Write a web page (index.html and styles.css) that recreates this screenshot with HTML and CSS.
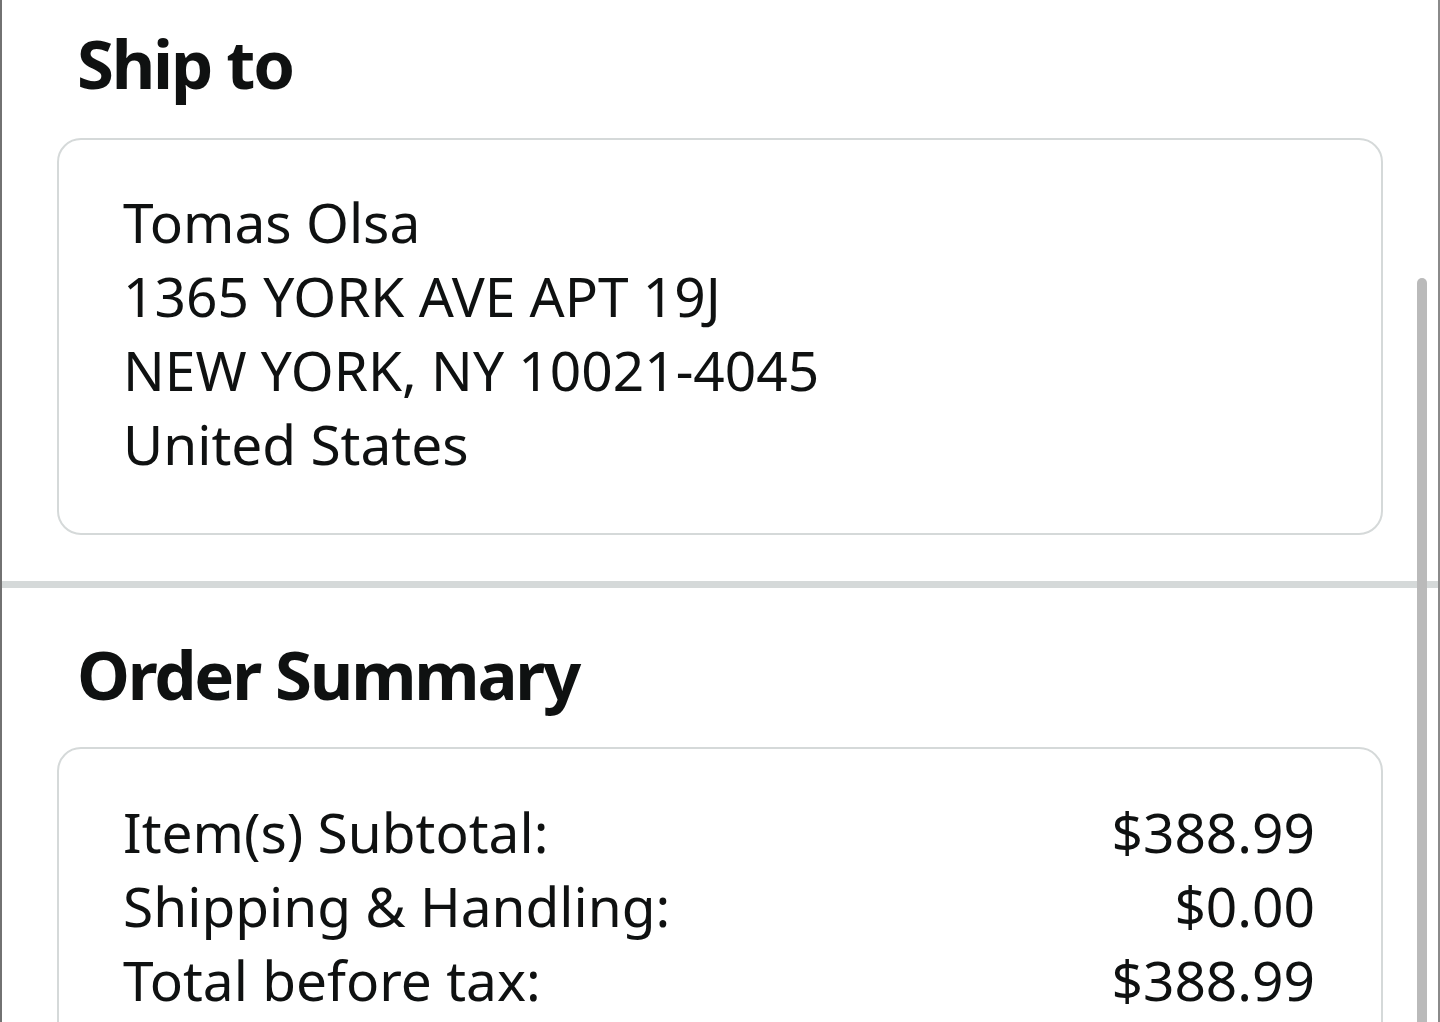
FILE: index.html
```html
<!DOCTYPE html>
<html lang="en">
<head>
    <meta charset="UTF-8">
    <meta name="viewport" content="width=device-width, initial-scale=1.0">
    <title>Checkout - Review</title>
    <link rel="stylesheet" href="styles.css">
</head>
<body>
    <div class="page">
        <section class="section">
            <h2>Ship to</h2>
            <div class="card address">
                <div>Tomas Olsa</div>
                <div>1365 YORK AVE APT 19J</div>
                <div>NEW YORK, NY 10021-4045</div>
                <div>United States</div>
            </div>
        </section>

        <hr class="divider">

        <section class="section summary-section">
            <h2>Order Summary</h2>
            <div class="card summary">
                <div class="row">
                    <span>Item(s) Subtotal:</span>
                    <span>$388.99</span>
                </div>
                <div class="row">
                    <span>Shipping &amp; Handling:</span>
                    <span>$0.00</span>
                </div>
                <div class="row">
                    <span>Total before tax:</span>
                    <span>$388.99</span>
                </div>
            </div>
        </section>

        <div class="scrollbar"></div>
    </div>
</body>
</html>
```

FILE: styles.css
```css
* {
    margin: 0;
    padding: 0;
    box-sizing: border-box;
}

html, body {
    height: 100%;
    overflow: hidden;
}

body {
    background: #fff;
    color: #0f1111;
    font-family: 'Noto Sans', 'Open Sans', sans-serif;
}

.page {
    position: relative;
    min-height: 100%;
    border-left: 2px solid #727272;
    border-right: 2px solid #8a8a8a;
}

.section {
    padding: 22px 55px 46px;
}

.summary-section {
    padding-top: 45px;
}

h2 {
    font-size: 67px;
    font-weight: 700;
    line-height: 82px;
    padding-left: 20px;
    margin-bottom: 34px;
    letter-spacing: -2.2px;
}

.summary-section h2 {
    margin-bottom: 32px;
}

.card {
    border: 2px solid #d5d9d9;
    border-radius: 24px;
    padding: 45px 66px 52px 64px;
    font-size: 55px;
    line-height: 74px;
}

.summary {
    padding-top: 46px;
}

.row {
    display: flex;
    justify-content: space-between;
}

.divider {
    border: none;
    height: 7px;
    background: #d5d9d9;
}

.scrollbar {
    position: absolute;
    top: 278px;
    right: 11px;
    bottom: 0;
    width: 10px;
    border-radius: 5px 5px 0 0;
    background: #bababa;
}
```
